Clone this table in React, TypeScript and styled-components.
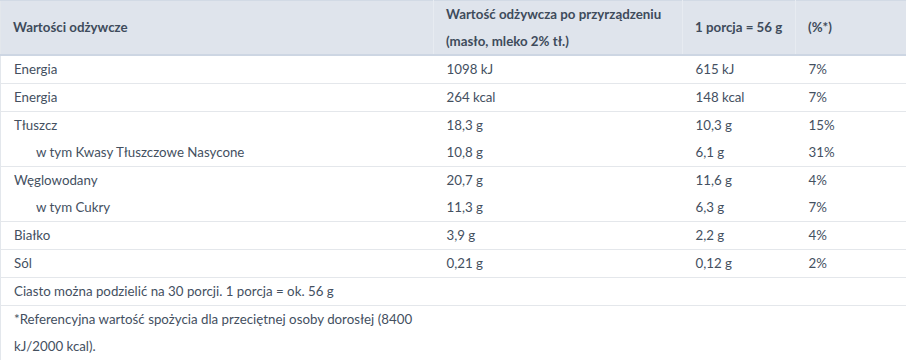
import React from 'react'
import styled, { createGlobalStyle } from 'styled-components'

const Global = createGlobalStyle`
    body {
        margin: 0;
        background: #fff;
        font-family: Lato, "Open Sans", sans-serif;
        color: #3c4a5b;
    }
`

const Table = styled.table`
    width: 100%;
    border-collapse: collapse;
    font-size: 13.3px;
    table-layout: fixed;
    border-left: 1px solid #e3e7ec;
    th, td {
        box-sizing: border-box;
    }
`

const Head = styled.thead`
    background: #dfe4ec;
    border-top: 1px solid #d2dae5;
    border-bottom: 2px solid #cdd6e3;
`

const HeadCell = styled.th<{ $width?: number }>`
    width: ${p => (p.$width ? p.$width + 'px' : 'auto')};
    text-align: left;
    font-weight: 700;
    line-height: 26.5px;
    padding: 0 12px;
    vertical-align: middle;
    color: #3e4b5b;
    & + & {
        border-left: 1px solid #e7ebf1;
    }
`

const Row = styled.tr<{ $last?: boolean }>`
    border-bottom: ${p => (p.$last ? '1px solid #e4e7eb' : 'none')};
`

const Cell = styled.td<{ $indent?: boolean }>`
    padding: 0 12px 0 ${p => (p.$indent ? '35px' : '13px')};
    line-height: 27px;
    vertical-align: top;
    font-weight: 400;
    color: #44505f;
`

type Item = { name: string; prepared: string; portion: string; pct: string; sub?: boolean; last: boolean }

const items: Item[] = [
    { name: 'Energia', prepared: '1098 kJ', portion: '615 kJ', pct: '7%', last: true },
    { name: 'Energia', prepared: '264 kcal', portion: '148 kcal', pct: '7%', last: true },
    { name: 'Tłuszcz', prepared: '18,3 g', portion: '10,3 g', pct: '15%', last: false },
    { name: 'w tym Kwasy Tłuszczowe Nasycone', prepared: '10,8 g', portion: '6,1 g', pct: '31%', sub: true, last: true },
    { name: 'Węglowodany', prepared: '20,7 g', portion: '11,6 g', pct: '4%', last: false },
    { name: 'w tym Cukry', prepared: '11,3 g', portion: '6,3 g', pct: '7%', sub: true, last: true },
    { name: 'Białko', prepared: '3,9 g', portion: '2,2 g', pct: '4%', last: true },
    { name: 'Sól', prepared: '0,21 g', portion: '0,12 g', pct: '2%', last: true },
]

function App() {
    return (
        <>
            <Global />
            <Table>
                <Head>
                    <tr>
                        <HeadCell $width={433}>Wartości odżywcze</HeadCell>
                        <HeadCell $width={249}>Wartość odżywcza po przyrządzeniu (masło, mleko 2% tł.)</HeadCell>
                        <HeadCell $width={113}>1 porcja = 56 g</HeadCell>
                        <HeadCell>(%*)</HeadCell>
                    </tr>
                </Head>
                <tbody>
                    {items.map((it, i) => (
                        <Row key={i} $last={it.last}>
                            <Cell $indent={it.sub}>{it.name}</Cell>
                            <Cell>{it.prepared}</Cell>
                            <Cell>{it.portion}</Cell>
                            <Cell>{it.pct}</Cell>
                        </Row>
                    ))}
                    <Row $last>
                        <Cell colSpan={4}>Ciasto można podzielić na 30 porcji. 1 porcja = ok. 56 g</Cell>
                    </Row>
                    <Row>
                        <Cell>*Referencyjna wartość spożycia dla przeciętnej osoby dorosłej (8400 kJ/2000 kcal).</Cell>
                        <Cell />
                        <Cell />
                        <Cell />
                    </Row>
                </tbody>
            </Table>
        </>
    )
}

export default App
